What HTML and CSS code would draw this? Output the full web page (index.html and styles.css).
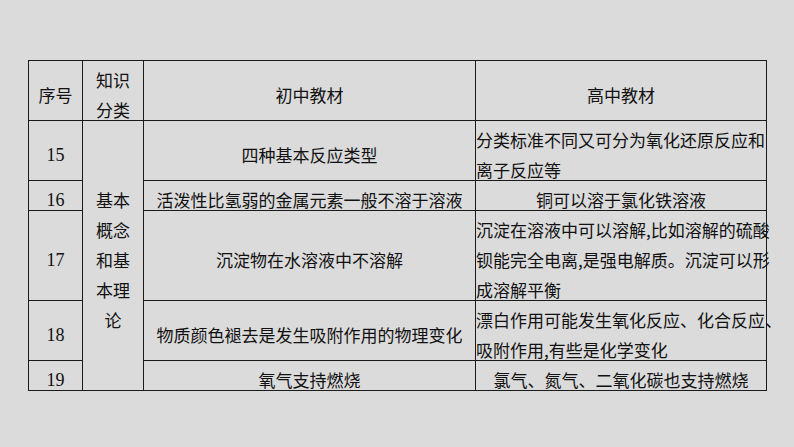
FILE: index.html
```html
<!DOCTYPE html>
<html lang="zh">
<head>
<meta charset="utf-8">
<title>表格</title>
<link rel="stylesheet" href="styles.css">
</head>
<body>
<div class="page">
  <div class="table">
    <div class="cell">序号</div>
    <div class="cell">知识<br>分类</div>
    <div class="cell">初中教材</div>
    <div class="cell">高中教材</div>

    <div class="cell num">15</div>
    <div class="cell cat">基本<br>概念<br>和基<br>本理<br>论</div>
    <div class="cell">四种基本反应类型</div>
    <div class="cell left">分类标准不同又可分为氧化还原反应和<br>离子反应等</div>

    <div class="cell num">16</div>
    <div class="cell">活泼性比氢弱的金属元素一般不溶于溶液</div>
    <div class="cell">铜可以溶于氯化铁溶液</div>

    <div class="cell num">17</div>
    <div class="cell">沉淀物在水溶液中不溶解</div>
    <div class="cell left">沉淀在溶液中可以溶解,比如溶解的硫酸<br>钡能完全电离,是强电解质。沉淀可以形<br>成溶解平衡</div>

    <div class="cell num">18</div>
    <div class="cell">物质颜色褪去是发生吸附作用的物理变化</div>
    <div class="cell left">漂白作用可能发生氧化反应、化合反应、<br>吸附作用,有些是化学变化</div>

    <div class="cell num">19</div>
    <div class="cell">氧气支持燃烧</div>
    <div class="cell">氯气、氮气、二氧化碳也支持燃烧</div>
  </div>
</div>
</body>
</html>
```

FILE: styles.css
```css
html, body {
  margin: 0;
  padding: 0;
  background: #dbdbdb;
}

.page {
  width: 794px;
  height: 447px;
  padding: 60px 0 0 28px;
  box-sizing: border-box;
  overflow: hidden;
}

.table {
  display: grid;
  grid-template-columns: 53px 60px 331px 290px;
  grid-template-rows: 59px 59px 29px 89px 59px 29px;
  gap: 1px;
  padding: 1px;
  width: max-content;
  background: #1a1a1a;
  font-family: "Noto Sans CJK SC", "Noto Sans", sans-serif;
  font-size: 17px;
  line-height: 30px;
  color: #111111;
}

.cell {
  background: #dbdbdb;
  display: flex;
  align-items: center;
  justify-content: center;
  text-align: center;
  white-space: nowrap;
  padding-top: 8px;
  box-sizing: border-box;
  min-height: 0;
  overflow: visible;
}

.num {
  font-family: "Liberation Serif", "Times New Roman", serif;
  font-size: 18px;
}

.cat {
  grid-column: 2;
  grid-row: 2 / 7;
}

.left {
  justify-content: flex-start;
  text-align: left;
}
```
